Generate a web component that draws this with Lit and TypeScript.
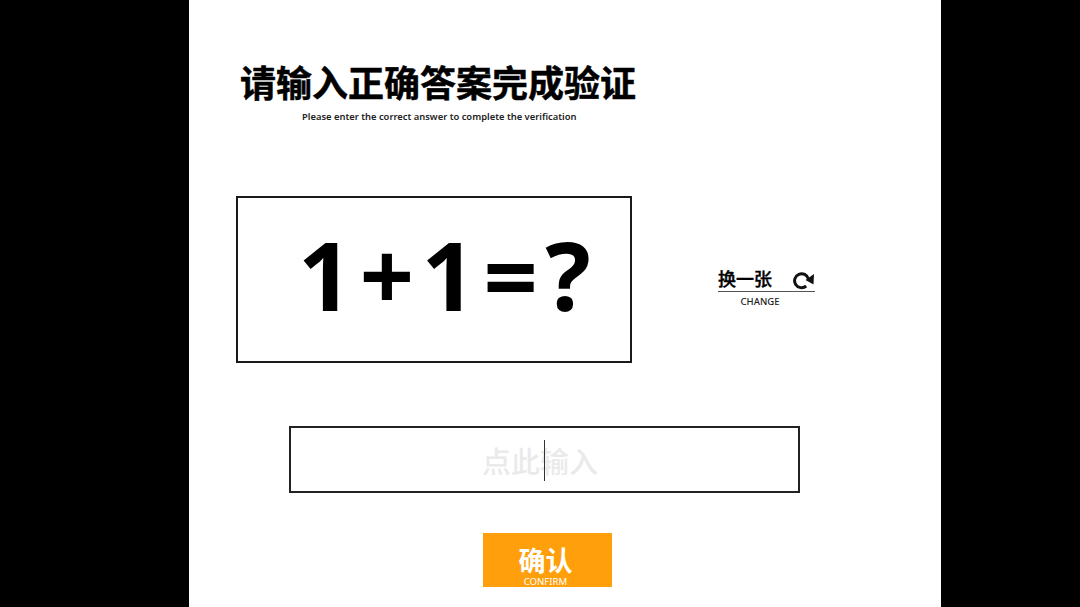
import { LitElement, html, css } from "lit";
import { customElement } from "lit/decorators.js";

@customElement("app-root")
export class AppRoot extends LitElement {
  static styles = css`
    :host { display: block; width: 1080px; height: 607px; background: #000; overflow: hidden;
      font-family: "Noto Sans", "Noto Sans CJK SC", sans-serif; color: #000; }
    .panel { box-sizing: border-box; width: 752px; height: 607px; margin-left: 189px; background: #fff;
      display: flex; flex-direction: column; align-items: flex-start; }
    .head { margin: 59px 0 0 51px; width: 396px; display: flex; flex-direction: column; }
    .title { font: 700 36px/44px "Noto Sans CJK SC", sans-serif; white-space: nowrap; -webkit-text-stroke: 0.5px #000; }
    .sub { font: 600 9.4px/14px "Noto Sans", sans-serif; color: #222; margin: 7px 0 0 62px; white-space: nowrap; }
    .row { display: flex; align-items: center; margin: 72px 0 0 47px; }
    .q { box-sizing: border-box; width: 396px; height: 167px; border: 2px solid #1a1a1a;
      display: flex; align-items: center; justify-content: center; }
    .expr { font: 700 95px/1 "Noto Sans", sans-serif; letter-spacing: 7.5px; margin: -11px 0 0 28px; white-space: nowrap; }
    .change { margin-left: 86px; width: 97px; display: flex; flex-direction: column; align-items: stretch; margin-top: 15px; }
    .change-top { display: flex; justify-content: space-between; align-items: center; border-bottom: 1px solid #555; height: 25px; }
    .change-cn { font: 500 18px/24px "Noto Sans CJK SC", sans-serif; -webkit-text-stroke: 0.4px #000; margin-bottom: 2px; }
    .change-en { font: 500 9.5px/13px "Noto Sans", sans-serif; text-align: center; margin: 3px 13px 0 0; color: #222; }
    svg { display: block; }
    .input { box-sizing: border-box; width: 511px; height: 67px; border: 2px solid #222; margin: 63px 0 0 100px;
      display: flex; align-items: center; position: relative; }
    .ph { font: 500 29px/36px "Noto Sans CJK SC", sans-serif; color: #eaeaea; margin-left: 191px; white-space: nowrap; }
    .caret { position: absolute; left: 253px; top: 12px; width: 1px; height: 41px; background: #333; }
    .btn { box-sizing: border-box; width: 129px; height: 54px; margin: 40px 0 0 294px; background: #ff9f0b; color: #fff;
      display: flex; flex-direction: column; align-items: center; }
    .btn-cn { font: 700 27px/28px "Noto Sans CJK SC", sans-serif; margin: 13px 4px 0 0; }
    .btn-en { font: 400 9.6px/12px "Noto Sans", sans-serif; margin: 2px 4px 0 0; }
  `;

  render() {
    return html`
      <div class="panel">
        <div class="head">
          <div class="title">请输入正确答案完成验证</div>
          <div class="sub">Please enter the correct answer to complete the verification</div>
        </div>
        <div class="row">
          <div class="q"><span class="expr">1+1=?</span></div>
          <div class="change">
            <div class="change-top">
              <span class="change-cn">换一张</span>
              <svg width="22" height="22" viewBox="0 0 22 22" fill="none">
                <path d="M13.2 18A7 7 0 1 1 15.4 11" stroke="#111" stroke-width="3" />
                <path d="M12.5 12L21 6L20.5 16.5Z" fill="#111" />
              </svg>
            </div>
            <div class="change-en">CHANGE</div>
          </div>
        </div>
        <div class="input">
          <span class="ph">点此输入</span>
          <span class="caret"></span>
        </div>
        <div class="btn">
          <span class="btn-cn">确认</span>
          <span class="btn-en">CONFIRM</span>
        </div>
      </div>
    `;
  }
}
